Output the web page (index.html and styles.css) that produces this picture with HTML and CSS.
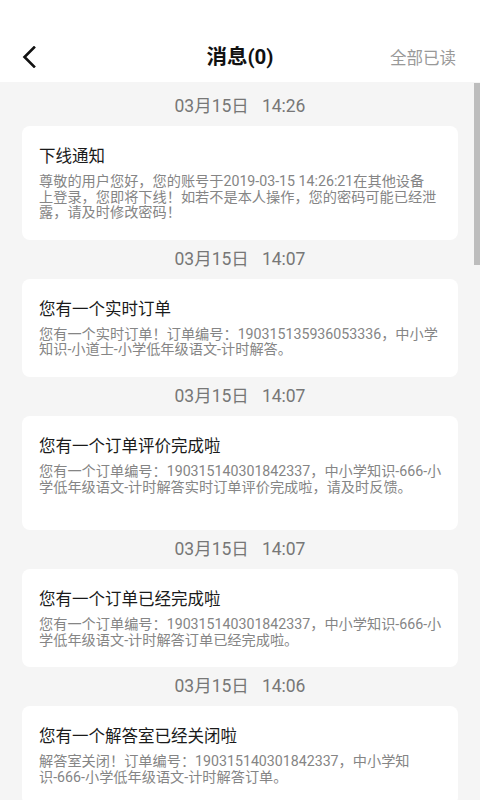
FILE: index.html
```html
<!DOCTYPE html>
<html lang="zh-CN">
<head>
<meta charset="utf-8">
<title>消息</title>
<link rel="stylesheet" href="styles.css">
</head>
<body>
<div class="page">
  <header class="header">
    <div class="nav">
      <span class="back">
        <svg width="16" height="22" viewBox="0 0 16 22"><path d="M13 1.5 L3.5 11 L13 20.5" fill="none" stroke="#111" stroke-width="2.6" stroke-linecap="square"/></svg>
      </span>
      <h1 class="title">消息(0)</h1>
      <span class="read-all">全部已读</span>
    </div>
  </header>
  <main class="list">
    <div class="date">03月15日&nbsp;&nbsp;&nbsp;14:26</div>
    <div class="card">
      <div class="card-title">下线通知</div>
      <div class="card-body">尊敬的用户您好，您的账号于2019-03-15 14:26:21在其他设备<br>上登录，您即将下线！如若不是本人操作，您的密码可能已经泄露，请及时修改密码！</div>
    </div>
    <div class="date">03月15日&nbsp;&nbsp;&nbsp;14:07</div>
    <div class="card">
      <div class="card-title">您有一个实时订单</div>
      <div class="card-body">您有一个实时订单！订单编号：190315135936053336，中小学知识-小道士-小学低年级语文-计时解答。</div>
    </div>
    <div class="date">03月15日&nbsp;&nbsp;&nbsp;14:07</div>
    <div class="card card-tall">
      <div class="card-title">您有一个订单评价完成啦</div>
      <div class="card-body">您有一个订单编号：190315140301842337，中小学知识-666-小学低年级语文-计时解答实时订单评价完成啦，请及时反馈。</div>
    </div>
    <div class="date">03月15日&nbsp;&nbsp;&nbsp;14:07</div>
    <div class="card">
      <div class="card-title">您有一个订单已经完成啦</div>
      <div class="card-body">您有一个订单编号：190315140301842337，中小学知识-666-小学低年级语文-计时解答订单已经完成啦。</div>
    </div>
    <div class="date">03月15日&nbsp;&nbsp;&nbsp;14:06</div>
    <div class="card">
      <div class="card-title">您有一个解答室已经关闭啦</div>
      <div class="card-body">解答室关闭！订单编号：190315140301842337，中小学知识-666-小学低年级语文-计时解答订单。</div>
    </div>
  </main>
  <div class="scrollbar"></div>
</div>
</body>
</html>
```
FILE: styles.css
```css
* { box-sizing: border-box; margin: 0; padding: 0; }
html, body { width: 480px; height: 800px; overflow: hidden; }
body {
  font-family: Roboto, "Noto Sans CJK SC", sans-serif;
  background: #f5f5f5;
}
.page { position: relative; width: 480px; height: 800px; overflow: hidden; }
.header { background: #fff; padding-top: 32px; height: 82px; }
.nav {
  height: 50px;
  display: grid;
  grid-template-columns: 1fr auto 1fr;
  align-items: center;
}
.back { padding-left: 21px; display: flex; align-items: center; }
.title {
  font-size: 20.5px;
  font-weight: 700;
  color: #111;
  line-height: 50px;
}
.read-all {
  justify-self: end;
  padding-right: 24px;
  font-size: 16.5px;
  color: #999;
}
.list { padding: 5px 22px 0; }
.date {
  height: 39px;
  line-height: 39px;
  text-align: center;
  font-size: 17.5px;
  color: #777;
}
.card {
  background: #fff;
  border-radius: 8px;
  padding: 20px 14px 19px 17px;
}
.card-tall { padding-bottom: 35px; }
.card-title {
  font-size: 16.5px;
  line-height: 22px;
  color: #1a1a1a;
}
.card-body {
  margin-top: 6px;
  font-size: 14.2px;
  line-height: 15.6px;
  color: #858585;
  text-spacing-trim: space-all;
}
.scrollbar {
  position: absolute;
  right: 0;
  top: 83px;
  width: 6px;
  height: 182px;
  background: #bdbdbd;
}
```
